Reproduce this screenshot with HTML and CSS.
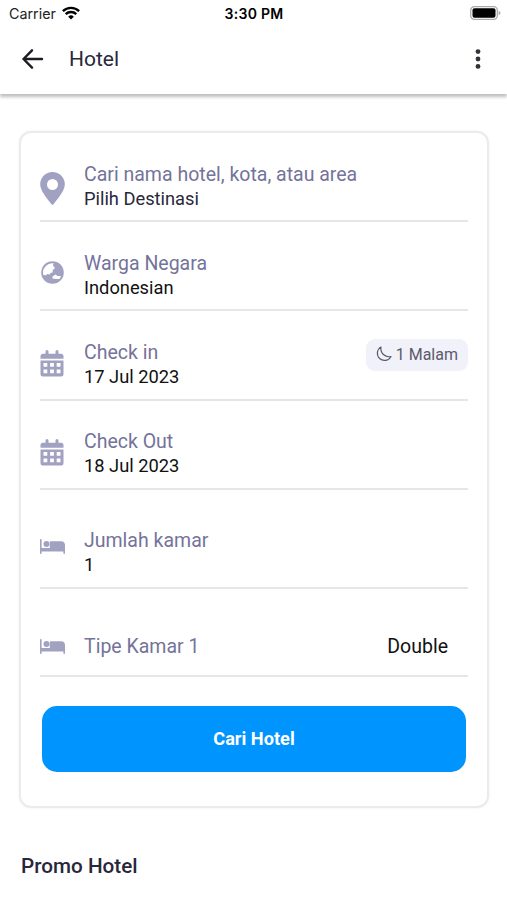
FILE: index.html
```html
<!DOCTYPE html>
<html lang="id">
<head>
<meta charset="utf-8">
<title>Hotel</title>
<link rel="stylesheet" href="styles.css">
</head>
<body>
<svg class="defs" width="0" height="0" aria-hidden="true">
  <symbol id="calendar" viewBox="0 0 24 27">
    <path d="M.5 10.500h23V24a2.500 2.500 0 0 1-2.500 2.500H3A2.500 2.500 0 0 1 .5 24zM3.500 13v3.800h3.800V13zm6.600 0v3.800h3.800V13zm6.600 0v3.800h3.800V13zM3.500 19.500v3.800h3.800v-3.800zm6.600 0v3.800h3.800v-3.800zm6.600 0v3.800h3.800v-3.800z" fill-rule="evenodd"/>
    <path d="M.5 8.800V6.200A2.500 2.500 0 0 1 3 3.700h2.500V1.600a1.500 1.500 0 0 1 3 0v2.100h7V1.600a1.500 1.500 0 0 1 3 0v2.100H21a2.500 2.500 0 0 1 2.500 2.500v2.600z"/>
  </symbol>
  <symbol id="bed" viewBox="0 0 25 15">
    <path d="M0 .8A.8.8 0 0 1 1.600.8V9H9.800V3.200a.9.900 0 0 1 .9-.9H21a4 4 0 0 1 4 4V14.200a.8.800 0 0 1-1.600 0V12.500H1.600v1.700a.8.800 0 0 1-1.600 0z"/>
    <circle cx="6.500" cy="5" r="3"/>
  </symbol>
</svg>
<div class="status">
  <div class="carrier">Carrier
    <svg width="18" height="14" viewBox="0 0 18 14" fill="none" stroke="#000" stroke-width="2.400"><path d="M.9 5.200a11.600 11.600 0 0 1 16.200 0M3.700 8.200a7.600 7.600 0 0 1 10.600 0"/><path d="M9 13.500 6.200 10.700a4 4 0 0 1 5.600 0z" fill="#000" stroke="none"/></svg>
  </div>
  <div class="time">3:30 PM</div>
  <svg class="battery" width="31" height="14" viewBox="0 0 31 14"><rect x=".7" y=".7" width="26.600" height="12.600" rx="3.600" fill="#fff" stroke="#aaa" stroke-width="1.300"/><rect x="2.500" y="2.300" width="23" height="9.400" rx="2"/><path d="M28.600 4.800q1.900.7 1.900 2.200t-1.900 2.200z" fill="#aaa"/></svg>
</div>
<header class="bar">
  <svg width="22" height="20" viewBox="0 0 22 20" fill="none" stroke="#1d1c24" stroke-width="2.400" stroke-linecap="round" stroke-linejoin="round"><path d="M20 10H1.500M10 1.300 1.500 10l8.500 8.700"/></svg>
  <h1>Hotel</h1>
  <svg class="more" width="6" height="20" viewBox="0 0 6 20" fill="#333238"><circle cx="3" cy="2.600" r="2.400"/><circle cx="3" cy="10" r="2.400"/><circle cx="3" cy="17.400" r="2.400"/></svg>
</header>
<main>
  <section class="card">
    <div class="row">
      <svg class="pin" width="25" height="33" viewBox="0 0 25 33"><path fill-rule="evenodd" d="M12.500 0A12.300 12.300 0 0 1 24.800 12.300C24.800 18 20 24 13.500 32.200q-1 1.200-2 0C5 24 .2 18 .2 12.300A12.300 12.300 0 0 1 12.500 0zm0 7a5.500 5.500 0 1 0 0 11 5.500 5.500 0 0 0 0-11z"/></svg>
      <div class="text"><span class="label">Cari nama hotel, kota, atau area</span><span class="value dim">Pilih Destinasi</span></div>
    </div>
    <div class="row">
      <svg class="globe" width="23" height="23" viewBox="0 0 23 23"><circle cx="11.500" cy="11.500" r="11.300"/><path fill="#fff" d="M7.500 3 12.500 2 12 4.500 14 7 11.800 9 11.500 11.500 9.500 12 8.600 13.500 6.500 13 4.500 14.500 2 13.500Q1 7 7.500 3zM11.500 15.500 14.500 13.500 16.500 15 20 15 18.500 18 14.500 18 11.500 17.500z"/></svg>
      <div class="text"><span class="label">Warga Negara</span><span class="value">Indonesian</span></div>
    </div>
    <div class="row checkin">
      <svg class="cal" width="24" height="27"><use href="#calendar"/></svg>
      <div class="text"><span class="label">Check in</span><span class="value">17 Jul 2023</span></div>
      <div class="nights"><svg width="16" height="16" viewBox="0 0 16 16" fill="none" stroke="#5c5a6c" stroke-width="1.200" stroke-linejoin="round"><path d="M5 1A7.200 7.200 0 1 0 15 10.500 8.200 8.200 0 0 1 5 1z"/></svg>1 Malam</div>
    </div>
    <div class="row checkout">
      <svg class="cal" width="24" height="27"><use href="#calendar"/></svg>
      <div class="text"><span class="label">Check Out</span><span class="value">18 Jul 2023</span></div>
    </div>
    <div class="row rooms">
      <svg class="bed" width="25" height="15"><use href="#bed"/></svg>
      <div class="text"><span class="label">Jumlah kamar</span><span class="value">1</span></div>
    </div>
    <div class="row type">
      <svg class="bed-single" width="25" height="15"><use href="#bed"/></svg>
      <div class="text"><span class="label">Tipe Kamar 1</span></div>
      <span class="value choice">Double</span>
    </div>
    <button class="search">Cari Hotel</button>
  </section>
  <h2>Promo Hotel</h2>
</main>
</body>
</html>
```
FILE: styles.css
```css
* { box-sizing: border-box; }
body { margin: 0; height: 900px; overflow: hidden; background: #fff; font-family: Roboto, sans-serif; color: #111; }
svg { display: block; flex: none; }
.defs { position: absolute; }
.status { height: 28px; padding: 0 6px 2px 9px; display: grid; grid-template-columns: 1fr auto 1fr; align-items: center; font: 14.300px Inter, sans-serif; }
.carrier { display: flex; gap: 6px; align-items: center; color: #222; }
.time { font-weight: 600; font-size: 14px; letter-spacing: .3px; color: #000; margin-right: 2px; }
.battery { justify-self: end; }
.bar { height: 66px; padding: 0 26px 4px 22px; display: flex; align-items: center; box-shadow: 0 3px 3px rgba(0,0,0,.25); }
h1 { margin: 0 auto 0 25px; font-size: 21px; font-weight: 400; color: #29273b; }
main { padding: 37px 18px 0 19px; }
.card { height: 677px; padding: 0 19px; border: 2px solid #ebebeb; border-radius: 12px; box-shadow: 0 0 3px rgba(0,0,0,.06); }
.row { height: 89px; padding-bottom: 9px; border-bottom: 2px solid #e6e6e8; display: grid; grid-template-columns: 44px 1fr auto; align-items: end; fill: #a1a1c2; }
.checkin { height: 90px; padding-bottom: 10px; }
.checkout { padding-bottom: 10px; }
.rooms { height: 99px; padding-bottom: 10px; }
.type { height: 88px; padding-bottom: 16px; }
.text { display: flex; flex-direction: column; }
.label, .value { font-size: 19.500px; line-height: 25px; white-space: nowrap; }
.label { color: #74739a; }
.value { font-size: 18.300px; line-height: 24px; color: #111; }
.dim { color: #29273b; }
.pin { margin-bottom: 6px; }
.globe { margin: 0 0 16px 1px; }
.cal { margin-bottom: 12px; }
.bed { margin-bottom: 23px; }
.bed-single { margin-bottom: 5px; }
.nights { height: 32px; margin-bottom: 18px; padding: 0 10px; display: flex; align-items: center; gap: 4px; border-radius: 9px; background: #f1f1f9; font-size: 16px; line-height: 34px; color: #5c5a6c; }
.nights svg { margin-top: -3px; }
.choice { margin-right: 20px; font-size: 19.500px; line-height: 25px; }
.search { display: block; width: 424px; height: 66px; margin: 29px 0 0 2px; padding: 0 0 1px; border: 0; border-radius: 15px; background: #0094ff; color: #fff; font: 700 18.200px Roboto, sans-serif; }
h2 { margin: 44px 0 0 2px; font-size: 20.700px; line-height: 28px; font-weight: 500; color: #29273b; }
```
